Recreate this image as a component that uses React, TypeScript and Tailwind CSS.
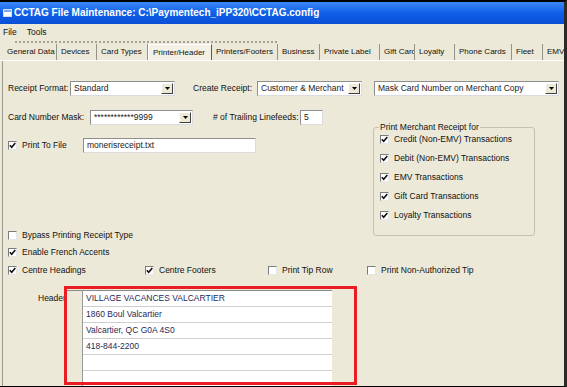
import React from 'react';

const tabs = [
  { label: 'General Data', w: 'w-[54px]' },
  { label: 'Devices', w: 'w-[40px]' },
  { label: 'Card Types', w: 'w-[51px]' },
  { label: 'Printer/Header', w: 'w-[64px]', active: true },
  { label: 'Printers/Footers', w: 'w-[66px]' },
  { label: 'Business', w: 'w-[42px]' },
  { label: 'Private Label', w: 'w-[60px]' },
  { label: 'Gift Card', w: 'w-[35px]' },
  { label: 'Loyalty', w: 'w-[40px]' },
  { label: 'Phone Cards', w: 'w-[57px]' },
  { label: 'Fleet', w: 'w-[31px]' },
  { label: 'EMV', w: 'w-[30px]' },
];

const merchantItems = [
  'Credit (Non-EMV) Transactions',
  'Debit (Non-EMV) Transactions',
  'EMV Transactions',
  'Gift Card Transactions',
  'Loyalty Transactions',
];

const headerLines = ['VILLAGE VACANCES VALCARTIER', '1860 Boul Valcartier', 'Valcartier, QC G0A 4S0', '418-844-2200', '', ''];

function Check({ on }: { on?: boolean }) {
  return (
    <span className="flex h-[9px] w-[9px] shrink-0 items-center justify-center border border-t-[#7c7c7c] border-l-[#7c7c7c] border-r-[#e6e6e6] border-b-[#e6e6e6] bg-white">
      {on && (
        <svg width="7" height="7" viewBox="0 0 7 7">
          <path d="M0.8 3.2 L2.7 5.3 L6.3 1" fill="none" stroke="#111" strokeWidth="1.6" />
        </svg>
      )}
    </span>
  );
}

function CheckRow({ on, label, className }: { on?: boolean; label: string; className?: string }) {
  return (
    <div className={`flex h-[12px] items-center ${className ?? ''}`}>
      <Check on={on} />
      <span className="ml-[5px] whitespace-nowrap">{label}</span>
    </div>
  );
}

function Select({ text, className }: { text: string; className: string }) {
  return (
    <div className={`flex h-[15px] items-center border border-[#8e8e8e] border-r-[#dcdcdc] border-b-[#dcdcdc] bg-white ${className}`}>
      <span className="flex-1 truncate pl-[3px] text-[#1a1a1a]">{text}</span>
      <span className="mr-[1px] flex h-[11px] w-[12px] items-center justify-center border border-t-white border-l-white border-r-[#404040] border-b-[#404040] bg-[#ece9d8]">
        <svg width="5" height="3" viewBox="0 0 5 3">
          <path d="M0 0 H5 L2.5 3 Z" fill="#000" />
        </svg>
      </span>
    </div>
  );
}

function Field({ text, className }: { text: string; className: string }) {
  return (
    <div className={`flex h-[15px] items-center border border-[#8e8e8e] border-r-[#dcdcdc] border-b-[#dcdcdc] bg-white pl-[3px] text-[#1a1a1a] ${className}`}>
      {text}
    </div>
  );
}

export default function App() {
  return (
    <div className="relative h-[387px] w-[567px] overflow-hidden border-t-2 border-r-[3px] border-b border-t-black border-r-[#2a2a2a] border-b-black bg-[#ece9d8] font-['Liberation_Sans',Arial,sans-serif] text-[8.5px] leading-none text-[#111]">
      {/* title bar */}
      <div className="flex h-[22px] items-center bg-linear-to-b from-[#3b87f4] via-[#0f5fe8] to-[#0a4fd6] pl-[3px]">
        <span className="flex h-[8px] w-[9px] items-start border border-[#cfe0ff] bg-white">
          <span className="h-[2px] w-full bg-[#7fa8e8]" />
        </span>
        <span className="ml-[2px] text-[10px] font-bold whitespace-nowrap text-white">
          CCTAG File Maintenance: C:\Paymentech_iPP320\CCTAG.config
        </span>
      </div>

      {/* menu */}
      <div className="flex h-[16px] items-center pl-[3px]">
        <span>File</span>
        <span className="ml-[10px]">Tools</span>
      </div>
      <div className="h-[4px] pt-[1px] pl-[15px]">
        <div className="w-[262px] border-t-2 border-dotted border-[#a4a39a]" />
      </div>

      {/* tabs */}
      <div className="flex h-[17px] border-b border-white pl-[3px] text-[8px]">
        {tabs.map((t) => (
          <div
            key={t.label}
            className={`flex shrink-0 items-center overflow-hidden pl-[4px] whitespace-nowrap ${t.w} ${
              t.active
                ? 'border-t border-l border-r border-t-white border-l-white border-r-[#5a5a5a] bg-[#f3f1e6]'
                : 'border-r border-[#94938a]'
            }`}
          >
            {t.label}
          </div>
        ))}
      </div>

      {/* content */}
      <div className="ml-[2px] flex h-full flex-col border-l border-[#9c9b92]">
        <div className="mt-[20px] flex h-[15px] items-center pl-[5px]">
          <span className="w-[62px] shrink-0">Receipt Format:</span>
          <Select text="Standard" className="w-[105px]" />
          <span className="ml-[18px] w-[64px] shrink-0">Create Receipt:</span>
          <Select text="Customer & Merchant" className="w-[105px]" />
          <Select text="Mask Card Number on Merchant Copy" className="ml-[12px] w-[185px]" />
        </div>

        <div className="mt-[14px] flex items-start">
          <div className="flex w-[370px] shrink-0 flex-col pl-[5px]">
            <div className="flex h-[15px] items-center">
              <span className="w-[82px] shrink-0">Card Number Mask:</span>
              <Select text="************9999" className="w-[103px]" />
              <span className="ml-[20px] w-[87px] shrink-0">
                # of Trailing Linefeeds:
              </span>
              <Field text="5" className="w-[23px]" />
            </div>
            <div className="mt-[13px] flex h-[15px] items-center">
              <CheckRow on label="Print To File" className="w-[75px]" />
              <Field text="monerisreceipt.txt" className="w-[173px]" />
            </div>
            <CheckRow label="Bypass Printing Receipt Type" className="mt-[76px]" />
            <CheckRow on label="Enable French Accents" className="mt-[5px]" />
          </div>

          <fieldset className="m-0 mt-[12px] w-[162px] rounded-[3px] border border-[#c4c2b4] p-0 pb-[14px] pl-[6px]">
            <legend className="ml-[-1px] px-[1px] leading-[10px]">Print Merchant Receipt for</legend>
            <div className="mt-[1px] flex flex-col gap-[7px]">
              {merchantItems.map((m) => (
                <CheckRow key={m} on label={m} />
              ))}
            </div>
          </fieldset>
        </div>

        <div className="mt-[6px] flex h-[12px] items-center pl-[5px]">
          <CheckRow on label="Centre Headings" className="w-[137px]" />
          <CheckRow on label="Centre Footers" className="w-[123px]" />
          <CheckRow label="Print Tip Row" className="w-[99px]" />
          <CheckRow label="Print Non-Authorized Tip" />
        </div>

        <div className="mt-[14px] flex items-start pl-[35px]">
          <span className="mt-[4px] w-[29px] shrink-0">Header:</span>
          <div className="flex w-[265px] flex-col border-t border-[#8a8a8a]">
            {headerLines.map((line, i) => (
              <div key={i} className="flex h-[16px]">
                <div className="w-[16px] shrink-0 border-r border-[#9a9a9a] bg-[#ece9d8]" />
                <div className="flex flex-1 items-center border-b border-[#cfcfcf] bg-white pl-[3px] text-[#1f2a55]">
                  {line}
                </div>
              </div>
            ))}
          </div>
        </div>
      </div>

      {/* annotation box */}
      <div className="absolute top-[284px] left-[64px] h-[99px] w-[293px] border-[3px] border-[#ec1c24]" />
    </div>
  );
}
